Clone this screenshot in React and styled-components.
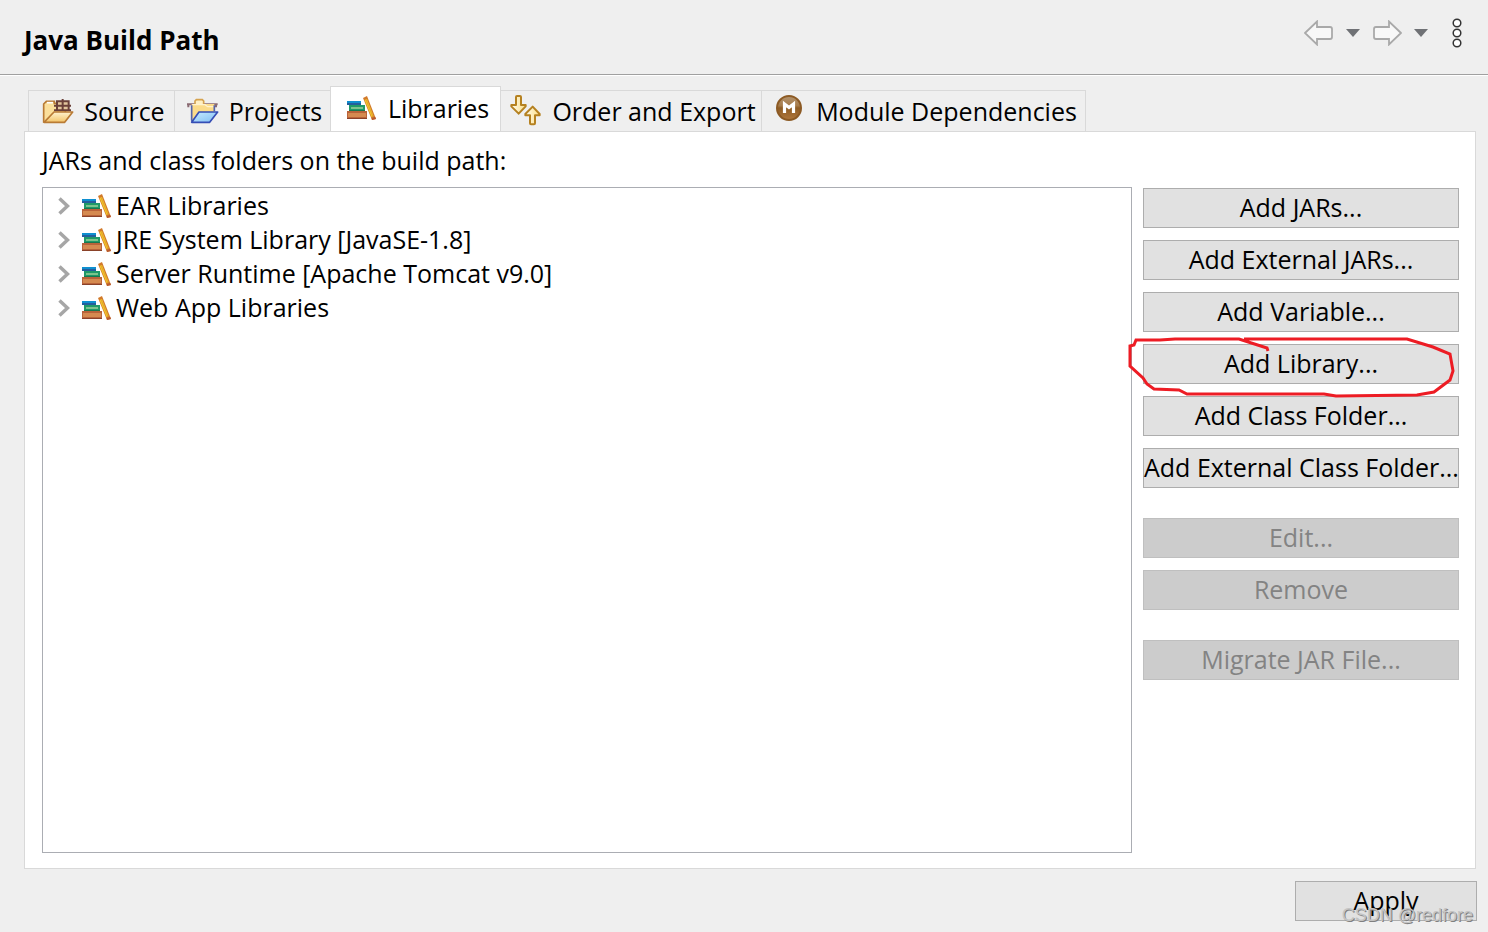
import React, { useState } from "react";
import styled, { createGlobalStyle } from "styled-components";

const BooksIcon = () => (
  <svg width="30" height="26" viewBox="0 0 30 26" aria-hidden="true">
    <rect x="0" y="6" width="14" height="4" fill="#0f8fd0" />
    <rect x="0" y="8" width="14" height="2" fill="#245f9c" />
    <rect x="2" y="10" width="16" height="6" fill="#1f9a68" />
    <rect x="4" y="12" width="12" height="2" fill="#7cc48d" />
    <rect x="2" y="15" width="16" height="1" fill="#17784f" />
    <rect x="0" y="16" width="20" height="8" fill="#b9633a" />
    <rect x="1" y="18" width="18" height="4" fill="#d58a50" />
    <rect x="0" y="23" width="20" height="1" fill="#8a4229" />
    <path d="M16 3L20 1L29 24L25 25Z" fill="#d27a2b" />
    <path d="M17.5 5L20 4L26.5 21L24.5 22Z" fill="#f3c72c" />
    <path d="M19 4.5L26.5 23" stroke="#dd9a2c" strokeWidth="0.8" />
    <path d="M24.6 23L28.2 21.8L29 24L25 25Z" fill="#b8592f" />
  </svg>
);

const SourceIcon = () => (
  <svg width="32" height="26" viewBox="0 0 96 78" aria-hidden="true">
    <defs>
      <linearGradient id="srcFront" x1="0" y1="0" x2="0" y2="1">
        <stop offset="0" stopColor="#fff3cf" />
        <stop offset="1" stopColor="#f3c468" />
      </linearGradient>
    </defs>
    <path
      d="M5 72V18L13 10H37V16H70V44L30 72Z"
      fill="#fbdf9b"
      stroke="#b97b35"
      strokeWidth="5"
    />
    <path d="M15 14H33" stroke="#fff" strokeWidth="5" />
    <path
      d="M45 10H80V37H45ZM36 23H87M62 3V37M36 37H87"
      fill="#e3c69c"
      stroke="#6b4038"
      strokeWidth="6"
    />
    <path
      d="M6 73L36 42H92L68 73Z"
      fill="url(#srcFront)"
      stroke="#b97b35"
      strokeWidth="5"
      strokeLinejoin="round"
    />
  </svg>
);

const ProjectsIcon = () => (
  <svg width="32" height="26" viewBox="0 0 96 78" aria-hidden="true">
    <defs>
      <linearGradient id="prjFront" x1="0" y1="0" x2="1" y2="1">
        <stop offset="0" stopColor="#c8ecff" />
        <stop offset="1" stopColor="#7fbdf3" />
      </linearGradient>
    </defs>
    <path d="M0 19H92M4 19V28M87 19V28" stroke="#8a6b73" strokeWidth="6" />
    <path
      d="M24 20V9L28 5H46L50 9V20"
      fill="#fff0c5"
      stroke="#d5a24e"
      strokeWidth="5"
    />
    <path d="M14 18H82V44L40 66H14Z" fill="#fbdb8a" />
    <path d="M16 20H54L62 26H80" fill="none" stroke="#fff2cd" strokeWidth="4" />
    <path
      d="M82 22V40M14 22V66L18 73"
      fill="none"
      stroke="#5565a9"
      strokeWidth="5"
    />
    <path
      d="M14 73L36 42H92L68 73Z"
      fill="url(#prjFront)"
      stroke="#354db5"
      strokeWidth="5"
      strokeLinejoin="round"
    />
  </svg>
);

const OrderIcon = () => (
  <svg width="32" height="32" viewBox="0 0 96 96" aria-hidden="true">
    <defs>
      <linearGradient id="ordFill" x1="0" y1="0" x2="1" y2="0">
        <stop offset="0" stopColor="#fffdf0" />
        <stop offset="1" stopColor="#fbdc83" />
      </linearGradient>
    </defs>
    <g
      fill="url(#ordFill)"
      stroke="#b58120"
      strokeWidth="6"
      strokeLinejoin="round"
    >
      <path d="M18 6Q18 3 21 3H30Q33 3 33 6V30H47V34L26 56L4 34V30H18Z" />
      <path d="M60 85Q60 88 63 88H72Q75 88 75 85V61H89V57L68 35L46 57V61H60Z" />
    </g>
  </svg>
);

const ModuleIcon = () => (
  <svg width="32" height="34" viewBox="0 0 32 34" aria-hidden="true">
    <defs>
      <linearGradient id="modFill" x1="0" y1="0" x2="0" y2="1">
        <stop offset="0" stopColor="#b29470" />
        <stop offset="0.4" stopColor="#a77c4b" />
        <stop offset="0.5" stopColor="#8e5c24" />
        <stop offset="1" stopColor="#b0773c" />
      </linearGradient>
    </defs>
    <circle
      cx="15"
      cy="14"
      r="12"
      fill="url(#modFill)"
      stroke="#8c5a24"
      strokeWidth="2"
    />
    <path
      d="M10.500 19V10L15 13.500L19.500 10V19"
      fill="none"
      stroke="#fff"
      strokeWidth="3.200"
    />
  </svg>
);

const ArrowIcon = ({ flip }) => (
  <svg width="30" height="26" viewBox="0 0 30 26" aria-hidden="true">
    <path
      d="M1 13L13 1.500V7H26Q28 7 28 9V17Q28 19 26 19H13V24.500Z"
      fill="#f8f8f8"
      stroke="#a9a9a9"
      strokeWidth="1.800"
      transform={flip ? "translate(30 0) scale(-1 1)" : undefined}
    />
  </svg>
);

const CaretIcon = () => (
  <svg width="14" height="8" viewBox="0 0 14 8" aria-hidden="true">
    <path d="M0 0H14L7 8Z" fill="#6f7175" />
  </svg>
);

const MenuIcon = () => (
  <svg width="10" height="30" viewBox="0 0 10 30" aria-hidden="true">
    <g fill="#fff" stroke="#333" strokeWidth="1.500">
      <circle cx="5" cy="5" r="3.800" />
      <circle cx="5" cy="15" r="3.800" />
      <circle cx="5" cy="25" r="3.800" />
    </g>
  </svg>
);

const ChevronIcon = () => (
  <svg width="12" height="18" viewBox="0 0 12 18" aria-hidden="true">
    <path
      d="M1.500 1.500L9.500 9L1.500 16.500"
      fill="none"
      stroke="#a6a6a6"
      strokeWidth="3.500"
    />
  </svg>
);

const tabs = [
  { name: "Source", icon: <SourceIcon />, width: 147 },
  { name: "Projects", icon: <ProjectsIcon />, width: 155 },
  { name: "Libraries", icon: <BooksIcon />, width: 171 },
  { name: "Order and Export", icon: <OrderIcon />, width: 261 },
  { name: "Module Dependencies", icon: <ModuleIcon />, width: 324 },
];

const libraries = [
  "EAR Libraries",
  "JRE System Library [JavaSE-1.8]",
  "Server Runtime [Apache Tomcat v9.0]",
  "Web App Libraries",
];

const App = () => {
  const [active, setActive] = useState("Libraries");
  return (
    <>
      <GlobalStyle />
      <Page>
        <Header>
          <h1>Java Build Path</h1>
          <Nav>
            <IconButton aria-label="Back">
              <ArrowIcon />
            </IconButton>
            <IconButton aria-label="Back history">
              <CaretIcon />
            </IconButton>
            <IconButton aria-label="Forward">
              <ArrowIcon flip />
            </IconButton>
            <IconButton aria-label="Forward history">
              <CaretIcon />
            </IconButton>
            <MenuButton aria-label="Menu">
              <MenuIcon />
            </MenuButton>
          </Nav>
        </Header>
        <Main>
          <Tabs role="tablist">
            {tabs.map((tab) => (
              <Tab
                key={tab.name}
                role="tab"
                aria-selected={active === tab.name}
                $active={active === tab.name}
                $width={tab.width}
                onClick={() => setActive(tab.name)}
              >
                <TabIcon>{tab.icon}</TabIcon>
                {tab.name}
              </Tab>
            ))}
          </Tabs>
          <Panel role="tabpanel">
            <Caption id="tree-label">
              JARs and class folders on the build path:
            </Caption>
            <Columns>
              <Tree aria-labelledby="tree-label">
                {libraries.map((name) => (
                  <TreeRow key={name}>
                    <Expander aria-label={"Expand " + name}>
                      <ChevronIcon />
                    </Expander>
                    <BooksIcon />
                    <span>{name}</span>
                  </TreeRow>
                ))}
              </Tree>
              <Actions>
                <Group>
                  <Button>Add JARs...</Button>
                  <Button>Add External JARs...</Button>
                  <Button>Add Variable...</Button>
                  <Marked>
                    <Button>Add Library...</Button>
                    <Scribble viewBox="0 0 330 64" aria-hidden="true">
                      <path d="M141 15L140 12L112 3H48L33 4H9L7 9L3 10V30L16 42L20 48L27 53L52 54L60 58H197L209 60L290 59L307 56L323 44L326 35L323 18L306 11L280 3H117" />
                    </Scribble>
                  </Marked>
                  <Button>Add Class Folder...</Button>
                  <Button>Add External Class Folder...</Button>
                </Group>
                <Group>
                  <Button disabled>Edit...</Button>
                  <Button disabled>Remove</Button>
                </Group>
                <Group>
                  <Button disabled>Migrate JAR File...</Button>
                </Group>
              </Actions>
            </Columns>
          </Panel>
        </Main>
        <Footer>
          <ApplyButton>Apply</ApplyButton>
          <Watermark>CSDN @redfore</Watermark>
        </Footer>
      </Page>
    </>
  );
};
export default App;

const GlobalStyle = createGlobalStyle`
  * {
    box-sizing: border-box;
  }
  body {
    margin: 0;
    background: #efefef;
    color: #000;
  }
  body, button {
    font-family: "Open Sans", "Noto Sans", sans-serif;
    font-size: 25px;
    line-height: 34px;
  }
  svg {
    display: block;
    flex-shrink: 0;
  }
`;
const Page = styled.div`
  display: flex;
  flex-direction: column;
  min-height: 100vh;
`;
const Header = styled.header`
  display: flex;
  justify-content: space-between;
  height: 76px;
  padding: 0 26px 0 24px;
  border-bottom: 1px solid #fff;
  box-shadow: inset 0 -1px #a0a0a0;
  h1 {
    margin: 23px 0 0;
    font-size: 26px;
    line-height: 34px;
  }
`;
const Nav = styled.nav`
  display: flex;
  align-items: center;
  gap: 12px;
  height: 66px;
`;
const IconButton = styled.button`
  padding: 0;
  border: 0;
  background: none;
`;
const MenuButton = styled(IconButton)`
  margin-left: 12px;
`;
const Main = styled.main`
  flex: 1;
  display: flex;
  flex-direction: column;
  padding: 10px 12px 0 24px;
`;
const Tabs = styled.div`
  display: flex;
  align-items: flex-end;
  height: 46px;
  padding-left: 4px;
  margin-bottom: -1px;
`;
const Tab = styled.button`
  display: flex;
  align-items: center;
  justify-content: center;
  gap: 10px;
  min-width: ${(props) => props.$width}px;
  height: ${(props) => (props.$active ? 46 : 42)}px;
  padding: ${(props) => (props.$active ? "0 0 2px 4px" : "0 0 0 4px")};
  border: 1px solid #d9d9d9;
  border-left-width: ${(props) => (props.$active ? 1 : 0)}px;
  border-right-width: ${(props) => (props.$active ? 1 : 0)}px;
  border-bottom-color: ${(props) => (props.$active ? "#fff" : "#d9d9d9")};
  background: ${(props) => (props.$active ? "#fff" : "#efefef")};
  color: #000;
  white-space: nowrap;
  &:first-child {
    border-left-width: 1px;
  }
  &:first-child,
  &:nth-child(4),
  &:last-child {
    border-right-width: 1px;
  }
`;
const TabIcon = styled.span`
  display: flex;
  justify-content: center;
  width: 32px;
`;
const Panel = styled.section`
  flex: 1;
  display: flex;
  flex-direction: column;
  padding: 11px 16px 15px 17px;
  border: 1px solid #d9d9d9;
  background: #fff;
`;
const Caption = styled.div`
  height: 44px;
`;
const Columns = styled.div`
  flex: 1;
  display: flex;
  gap: 11px;
`;
const Tree = styled.ul`
  flex: 1;
  margin: 0;
  padding: 1px 0 0 15px;
  border: 1px solid #abadb3;
  list-style: none;
`;
const TreeRow = styled.li`
  display: flex;
  align-items: center;
  height: 34px;
  span {
    margin-left: 4px;
    padding-bottom: 2px;
  }
`;
const Expander = styled.button`
  width: 24px;
  padding: 0;
  border: 0;
  background: none;
`;
const Actions = styled.div`
  display: flex;
  flex-direction: column;
  gap: 30px;
  width: 316px;
  padding-top: 1px;
`;
const Group = styled.div`
  display: flex;
  flex-direction: column;
  gap: 12px;
`;
const Button = styled.button`
  width: 100%;
  height: 40px;
  padding: 0 0 2px;
  border: 1px solid #adadad;
  background: #e1e1e1;
  color: #000;
  white-space: nowrap;
  &:disabled {
    border-color: #bfbfbf;
    background: #cccccc;
    color: #838383;
  }
`;
const Marked = styled.div`
  position: relative;
`;
const Scribble = styled.svg`
  position: absolute;
  left: -16px;
  top: -8px;
  width: 330px;
  height: 64px;
  fill: none;
  stroke: #ed1c24;
  stroke-width: 3;
  pointer-events: none;
`;
const Footer = styled.footer`
  position: relative;
  display: flex;
  justify-content: flex-end;
  padding: 12px 11px 11px;
`;
const ApplyButton = styled(Button)`
  width: 182px;
`;
const Watermark = styled.span`
  position: absolute;
  right: 15px;
  bottom: 6px;
  color: #c4c4c4;
  font-family: "Liberation Sans", sans-serif;
  font-size: 18px;
  line-height: 22px;
  text-shadow: 1px 1px #808080;
`;
